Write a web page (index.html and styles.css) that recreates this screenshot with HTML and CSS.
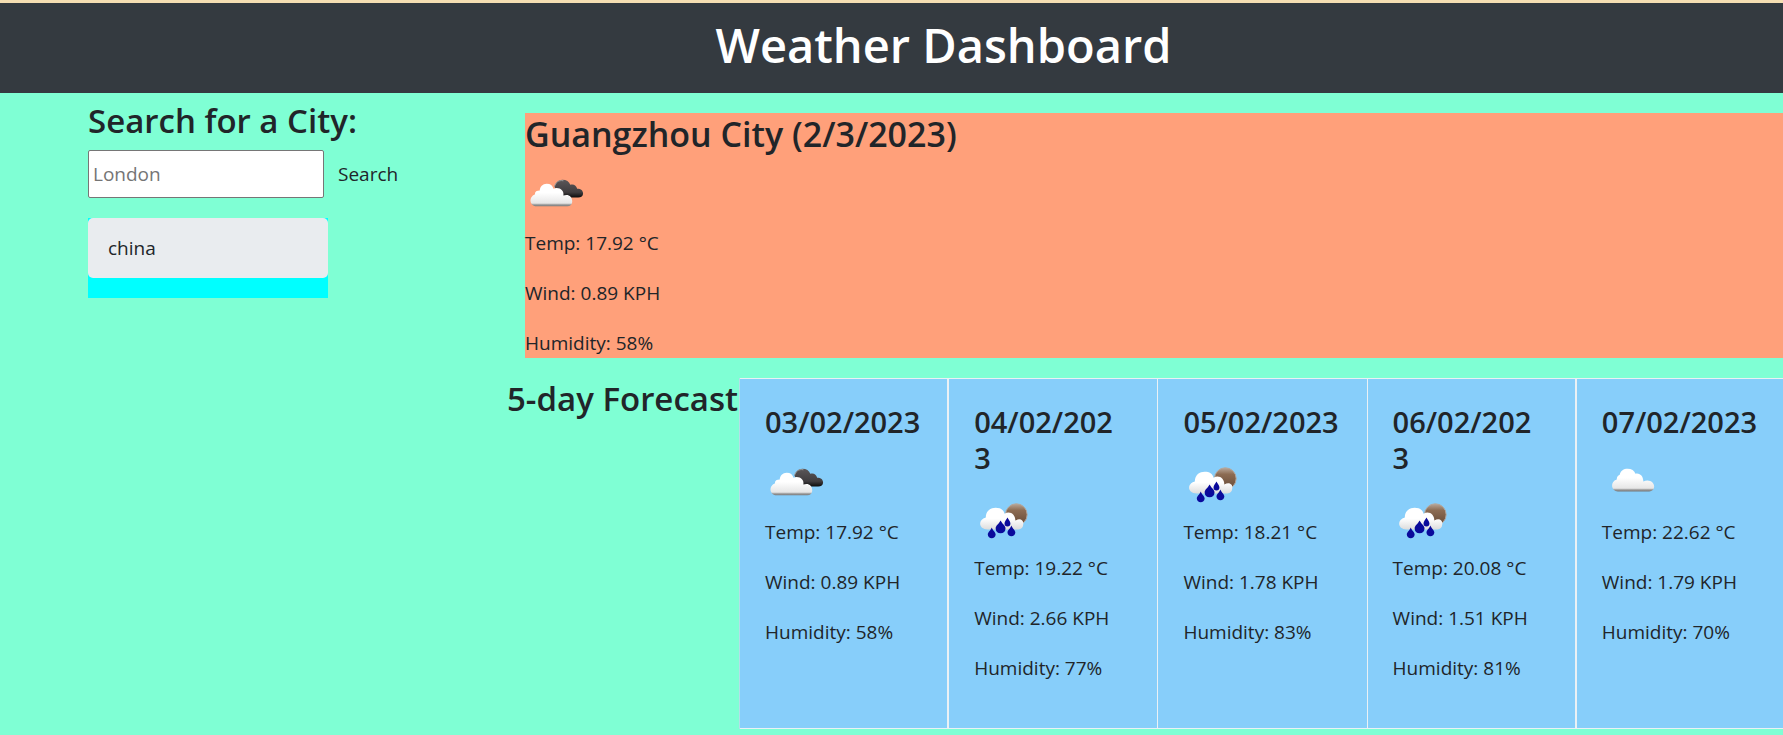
FILE: index.html
```html
<!DOCTYPE html>
<html lang="en">
<head>
<meta charset="utf-8">
<title>Weather Dashboard</title>
<link rel="stylesheet" href="styles.css">
</head>
<body>
<svg class="sprite" aria-hidden="true">
  <defs>
    <linearGradient id="white" x1="0" y1="0" x2="0" y2="1"><stop offset="0.4" stop-color="#fff"/><stop offset="0.86" stop-color="#e6e6e6"/><stop offset="0.93" stop-color="#999"/><stop offset="1" stop-color="#777"/></linearGradient>
    <linearGradient id="soft" x1="0" y1="0" x2="0" y2="1"><stop offset="0.5" stop-color="#fff"/><stop offset="1" stop-color="#ddd"/></linearGradient>
    <linearGradient id="dark" x1="0" y1="0" x2="0" y2="1"><stop offset="0" stop-color="#5a5658"/><stop offset="0.7" stop-color="#403d3f"/><stop offset="1" stop-color="#0c0c0c"/></linearGradient>
    <linearGradient id="moon" x1="0" y1="0" x2="0" y2="1"><stop offset="0" stop-color="#b9a89a"/><stop offset="0.3" stop-color="#8c6c53"/><stop offset="1" stop-color="#654936"/></linearGradient>
    <symbol id="broken" viewBox="0 0 64 64">
      <path fill="url(#dark)" d="M30 22C31 18 34 15 38 15C42 15 45 17 46 20C50 19 52 21 53 24C57 24 59 26 59 29C59 32 57 33 54 33H36Z"/>
      <path fill="none" stroke="#999" stroke-width="1" d="M30 22C31 18 34 15 39 16"/>
      <path fill="url(#white)" d="M12 42C5 42 3 33 10 30C10 27 12 26 15 26C15 22 18 19 22 19C26 19 28 21 29 24C35 22 40 26 39 31C44 29 48 32 48 37C48 40 46 42 43 42Z"/>
    </symbol>
    <symbol id="cloud" viewBox="0 0 64 64">
      <path fill="url(#white)" d="M16 38C9 38 8 28 15 26C15 23 16 22 18 21C19 17 22 15 26 15C30 15 33 17 34 20C39 19 42 23 42 28C48 25 53 29 53 33C53 36 51 38 48 38Z"/>
    </symbol>
    <symbol id="rain" viewBox="0 0 64 64">
      <circle cx="43" cy="25" r="11" fill="url(#moon)" stroke="#b3a79c"/>
      <path fill="url(#soft)" d="M14 40C4 40 4 30 12 28C12 21 17 18 22 18C27 18 30 20 31 24C37 21 42 25 42 31C47 28 51 31 50 35C50 38 48 40 45 40Z"/>
      <g fill="#0a0a9b">
        <path d="M27 31C25 35 22 36 22 39C22 42 24 44 27 44C30 44 32 42 32 39C32 36 29 35 27 31Z"/>
        <path d="M34 28C33 30 31 32 31 34C31 36 32 37 34 37C36 37 37 36 37 34C37 32 35 30 34 28ZM18 38C17 41 14 43 14 45C14 48 16 49 18 49C20 49 22 48 22 45C22 43 19 41 18 38ZM38 36C37 39 34 41 34 43C34 46 36 47 38 47C40 47 42 46 42 43C42 41 39 39 38 36Z"/>
      </g>
    </symbol>
  </defs>
</svg>
<header class="header"><h1 class="title">Weather Dashboard</h1></header>
<div class="layout">
  <aside class="sidebar">
    <form class="search">
      <label class="heading" for="city">Search for a City:</label>
      <div class="search-row">
        <input class="city-input" id="city" type="text" placeholder="London">
        <button class="search-button" type="button">Search</button>
      </div>
    </form>
    <ul class="history"><li><button class="history-item" type="button">china</button></li></ul>
  </aside>
  <main class="content">
    <section class="current">
      <h2 class="heading current-heading">Guangzhou City (2/3/2023)</h2>
      <svg class="icon" role="img" aria-label="Broken clouds"><use href="#broken"/></svg>
      <p>Temp: 17.92 °C</p>
      <p>Wind: 0.89 KPH</p>
      <p>Humidity: 58%</p>
    </section>
    <section class="forecast">
      <h2 class="heading forecast-heading">5-day Forecast</h2>
      <div class="cards">
        <article class="card">
          <h3 class="date">03/02/2023</h3>
          <svg class="icon" role="img" aria-label="Broken clouds"><use href="#broken"/></svg>
          <p>Temp: 17.92 °C</p><p>Wind: 0.89 KPH</p><p>Humidity: 58%</p>
        </article>
        <article class="card">
          <h3 class="date">04/02/202<br>3</h3>
          <svg class="icon" role="img" aria-label="Rain"><use href="#rain"/></svg>
          <p>Temp: 19.22 °C</p><p>Wind: 2.66 KPH</p><p>Humidity: 77%</p>
        </article>
        <article class="card">
          <h3 class="date">05/02/2023</h3>
          <svg class="icon" role="img" aria-label="Rain"><use href="#rain"/></svg>
          <p>Temp: 18.21 °C</p><p>Wind: 1.78 KPH</p><p>Humidity: 83%</p>
        </article>
        <article class="card">
          <h3 class="date">06/02/202<br>3</h3>
          <svg class="icon" role="img" aria-label="Rain"><use href="#rain"/></svg>
          <p>Temp: 20.08 °C</p><p>Wind: 1.51 KPH</p><p>Humidity: 81%</p>
        </article>
        <article class="card">
          <h3 class="date">07/02/2023</h3>
          <svg class="icon" role="img" aria-label="Cloudy"><use href="#cloud"/></svg>
          <p>Temp: 22.62 °C</p><p>Wind: 1.79 KPH</p><p>Humidity: 70%</p>
        </article>
      </div>
    </section>
  </main>
</div>
</body>
</html>
```
FILE: styles.css
```css
* { box-sizing: border-box; }
body {
  margin: 0;
  background: #7fffd4;
  color: #212529;
  font-family: "Open Sans", "Noto Sans", sans-serif;
  font-size: 19px;
  line-height: 30px;
  overflow-x: hidden;
}
h1, h2, h3, p, ul { margin: 0; padding: 0; }
button, input { font: inherit; color: inherit; }
.sprite { position: absolute; width: 0; height: 0; }
.header {
  border-top: 3px solid #f5deb3;
  background: #343a40;
  padding: 12px 0 18px 104px;
  text-align: center;
}
.title { color: #fff; font-size: 47px; line-height: 60px; font-weight: 600; }
.heading { display: block; font-size: 33px; line-height: 42px; font-weight: 600; white-space: nowrap; }
.current-heading { font-size: 34px; line-height: 43px; }
.layout { display: flex; }
.sidebar { flex: 0 0 507px; padding: 7px 0 0 88px; }
.search-row { display: flex; align-items: center; gap: 14px; margin-top: 8px; }
.city-input { width: 236px; height: 48px; padding: 1px 4px; border: 1px solid #767676; border-radius: 2px; background: #fff; }
.city-input::placeholder { color: #757575; opacity: 1; }
.search-button { padding: 0; border: 0; background: none; }
.history { width: 240px; margin-top: 20px; padding-bottom: 20px; background: #0ff; list-style: none; }
.history-item { display: block; width: 100%; padding: 15px 20px; border: 0; border-radius: 5px; background: #e9ecef; text-align: left; }
.content { flex: 1; min-width: 0; }
.current { margin: 20px 0 20px 18px; background: #ffa07a; }
.icon { display: block; width: 63px; height: 63px; margin-top: 9px; }
p + p { margin-top: 20px; }
.forecast { display: flex; align-items: flex-start; margin-right: -3px; }
.forecast-heading { flex: 0 0 232px; }
.cards { flex: 1; display: grid; grid-template-columns: repeat(5, 1fr); border-left: 1px solid #b4dfe9; }
.card { padding: 25px 0 45px 25px; border: solid #eaf1f5; border-width: 1px 1px 1px 0; background: #87cefa; }
.card:nth-child(3n + 1) { border-right-width: 2px; }
.date { font-size: 29px; line-height: 36px; font-weight: 600; }
.card .icon { margin-top: 14px; }
```
